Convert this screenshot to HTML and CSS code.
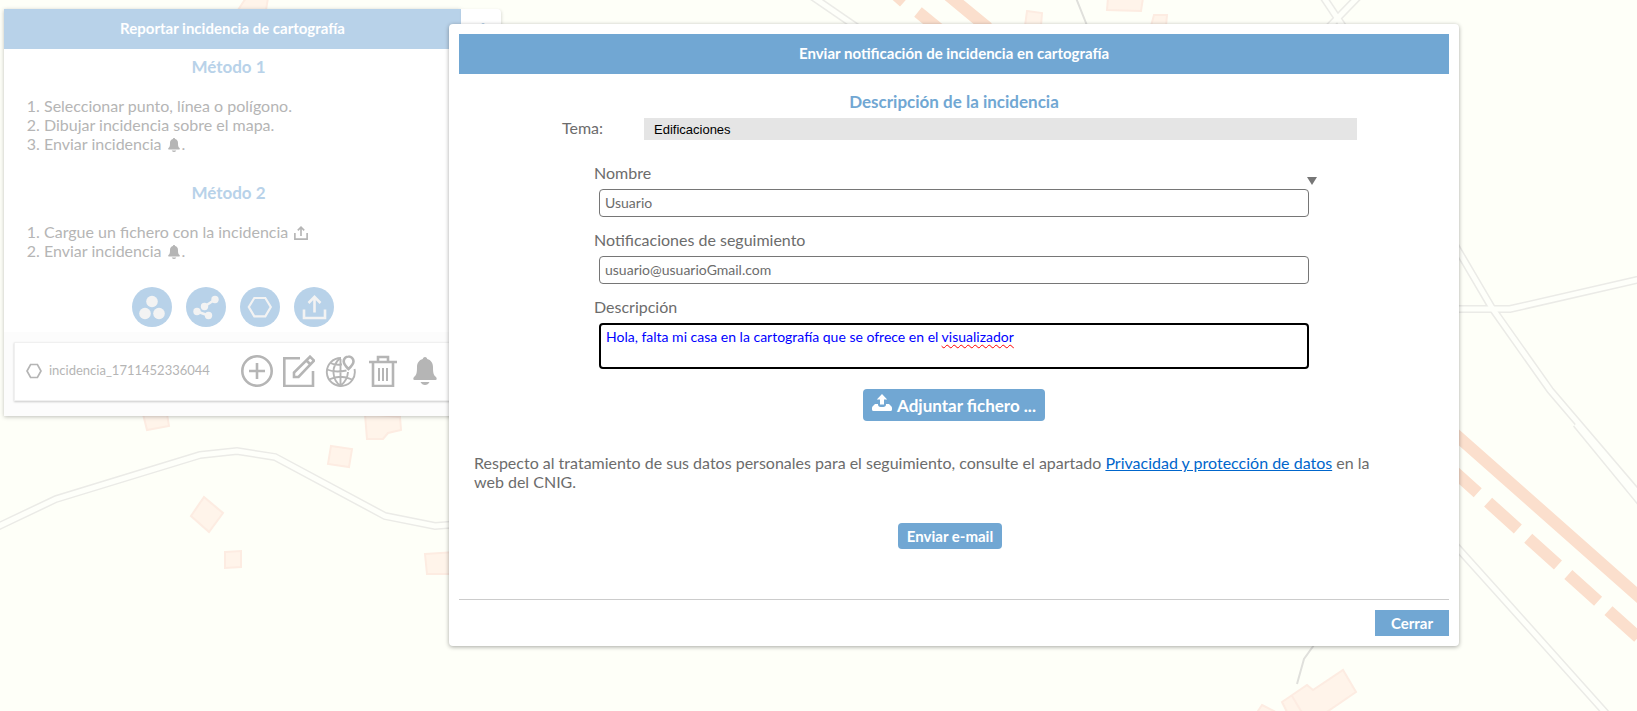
FILE: index.html
```html
<!DOCTYPE html>
<html lang="es">
<head>
<meta charset="utf-8">
<title>Incidencia en cartografía</title>
<link rel="stylesheet" href="styles.css">
</head>
<body>
<svg class="map" viewBox="0 0 1637 711" preserveAspectRatio="xMinYMin slice" aria-hidden="true">
  <g class="road-edge">
    <path d="M-5 528 56 499 200 455 237 451 275 457 385 516 435 526 460 524"/>
    <path d="M810 -5 858 28"/>
    <path d="M1455 245 1492 308 1550 390 1637 492 1650 508"/>
    <path d="M1455 309 1510 309 1637 280 1650 277"/>
    <path d="M1322 -5 1344 28M1360 -5 1326 30"/>
    <path d="M1455 545 1500 595 1612 720"/>
    <path d="M1576 424 1650 514"/>
  </g>
  <g class="road-fill">
    <path d="M-5 528 56 499 200 455 237 451 275 457 385 516 435 526 460 524"/>
    <path d="M810 -5 858 28"/>
    <path d="M1455 309 1510 309 1637 280 1650 277"/>
    <path d="M1455 245 1492 308 1550 390 1637 492 1650 508"/>
    <path d="M1322 -5 1344 28M1360 -5 1326 30"/>
    <path d="M1455 545 1500 595 1612 720"/>
    <path d="M1576 424 1650 514"/>
  </g>
  <path class="track" d="M1076 -2 1088 28M1314 645 1304 659 1297 684"/>
  <path class="rail" d="M1455 434 1645 602M948 -5 988 28"/>
  <path class="rail dashed" d="M1448 466 1650 648"/>
  <path class="rail" d="M895 -6 904 2M918 12 940 30"/>
  <g class="building">
    <path d="M143 414 167 414 169 426 147 430Z"/>
    <path d="M365 414 400 417 401 430 388 433 383 439 367 439Z"/>
    <path d="M331 446 352 449 349 467 328 464Z"/>
    <path d="M204 497 223 513 209 532 191 516Z"/>
    <path d="M225 552 241 551 241 567 225 568Z"/>
    <path d="M425 554 455 552 455 574 427 574Z"/>
    <path d="M246 -2 268 -2 266 10 238 10Z"/>
    <path d="M1108 -2 1143 -2 1141 11 1107 10Z"/>
    <path d="M1027 11 1042 13 1041 26 1025 26Z"/>
    <path d="M1154 15 1167 15 1166 26 1151 26Z"/>
    <path d="M1282 702 1307 685 1313 690 1343 670 1356 692 1318 718 1290 718ZM1292 696 1304 716"/>
    <path d="M1262 705 1274 711 1268 718 1256 714Z"/>
  </g>
</svg>

<aside class="panel">
  <button class="panel-tab" type="button" aria-label="Plegar panel"><svg viewBox="0 0 12 12"><path d="M9 0 2 6 9 12"/></svg></button>
  <div class="panel-body">
    <h2 class="bar">Reportar incidencia de cartografía</h2>
    <h3 class="method">Método 1</h3>
    <ol class="steps">
      <li>Seleccionar punto, línea o polígono.</li>
      <li>Dibujar incidencia sobre el mapa.</li>
      <li>Enviar incidencia <svg class="mini" viewBox="0 0 24 28"><use href="#bell"/></svg>.</li>
    </ol>
    <h3 class="method">Método 2</h3>
    <ol class="steps">
      <li>Cargue un fichero con la incidencia <svg class="mini wide" viewBox="0 0 24 24"><use href="#upload"/></svg></li>
      <li>Enviar incidencia <svg class="mini" viewBox="0 0 24 28"><use href="#bell"/></svg>.</li>
    </ol>
    <div class="tools">
      <button type="button" aria-label="Punto"><svg viewBox="0 0 40 40"><g fill="currentColor"><circle cx="20" cy="14.500" r="5.800"/><circle cx="13" cy="26.500" r="5.800"/><circle cx="27" cy="26.500" r="5.800"/></g></svg></button>
      <button type="button" aria-label="Línea"><svg viewBox="0 0 40 40"><g fill="currentColor"><circle cx="29" cy="12.500" r="3.700"/><circle cx="18.500" cy="19.500" r="3.700"/><circle cx="11" cy="24.500" r="3.700"/><circle cx="22.500" cy="28.500" r="3.700"/></g><path d="M29 12.500 18.500 19.500M11 24.500 22.500 28.500" fill="none" stroke="currentColor" stroke-width="2.600"/></svg></button>
      <button type="button" aria-label="Polígono"><svg viewBox="0 0 40 40"><path d="M14.300 11H25.300L30.800 20 25.300 29.300H14.300L8.800 20Z" fill="none" stroke="currentColor" stroke-width="2.200"/></svg></button>
      <button type="button" aria-label="Cargar"><svg viewBox="0 0 40 40"><path d="M10 22.500V31H31V22.500M20.500 25.500V10.500M14.500 16 20.500 9.800 26.500 16" fill="none" stroke="currentColor" stroke-width="2.600"/></svg></button>
    </div>
  </div>
  <div class="layers">
    <div class="layer">
      <svg class="hex" viewBox="0 0 16 16"><path d="M4.600 1.500H11.400L15 8 11.400 14.500H4.600L1 8Z" fill="none" stroke="currentColor" stroke-width="1.700"/></svg>
      <span class="layer-name">incidencia_1711452336044</span>
      <div class="layer-actions">
        <button type="button" aria-label="Añadir"><svg viewBox="0 0 32 32"><g fill="none" stroke="currentColor" stroke-width="2.600"><circle cx="16" cy="16" r="14.700"/><path d="M16 8V24M8 16H24"/></g></svg></button>
        <button type="button" aria-label="Editar"><svg viewBox="0 0 32 32"><g fill="none" stroke="currentColor" stroke-width="2.600"><path d="M17 3.300H1.300V31H30V16"/><path d="M11 22V17.500L27 1.700 31 5.700 15.500 22ZM23.500 5.500 27.500 9.500"/></g></svg></button>
        <button type="button" aria-label="Localizar"><svg viewBox="0 0 32 32"><g fill="none" stroke="currentColor" stroke-width="1.900"><path d="M16 3A14 14 0 1 0 29.500 14"/><path d="M14.500 3.500Q8 10 8.500 18T15.500 31Q22.500 25 23 17M2 14.500Q10 18 21.500 15.500M4 24.500Q15.500 19 27 24.500M5.500 8Q10 10.500 17 9.500M15.500 4V31"/></g><path d="M23.500 1.500A4.800 4.800 0 0 0 18.700 6.300C18.700 9.500 23.500 14 23.500 14S28.500 9.500 28.500 6.300A4.800 4.800 0 0 0 23.500 1.500Z" fill="#fff" stroke="currentColor" stroke-width="2.600"/></svg></button>
        <button type="button" aria-label="Borrar"><svg viewBox="0 0 32 32"><g fill="none" stroke="currentColor" stroke-width="2.600"><path d="M2 7H30M11 7V2H21V7M6 7V31H26V7"/><path d="M12 13V26M16 13V26M20 13V26" stroke-width="2"/></g></svg></button>
        <button type="button" aria-label="Enviar"><svg class="big-bell" viewBox="0 0 24 28"><g id="bell" fill="currentColor"><path d="M12 0C10.500 0 9.900 1 9.800 2 6 3 4 6 4 10 4 16 3.500 18 1 20 0 21 0 23 1.500 23H22.500C24 23 24 21 23 20 20.500 18 20 16 20 10 20 6 18 3 14.200 2 14.100 1 13.500 0 12 0Z"/><path d="M7.500 25H16.500Q15 28 12 28T7.500 25Z"/></g></svg></button>
      </div>
    </div>
  </div>
</aside>

<main class="stage">
<section class="dialog" role="dialog" aria-labelledby="dlg-title">
  <h2 class="bar dialog-bar" id="dlg-title">Enviar notificación de incidencia en cartografía</h2>
  <form class="report">
    <h3 class="subtitle">Descripción de la incidencia</h3>
    <div class="topic">
      <label for="tema">Tema:</label>
      <select id="tema"><option>Edificaciones</option></select>
    </div>
    <div class="fields">
      <span class="arrow" aria-hidden="true"></span>
      <label for="nombre">Nombre</label>
      <input id="nombre" type="text" value="Usuario">
      <label for="mail">Notificaciones de seguimiento</label>
      <input id="mail" type="text" value="usuario@usuarioGmail.com">
      <label id="desc-label">Descripción</label>
      <div class="editor" role="textbox" aria-labelledby="desc-label" aria-multiline="true" contenteditable="true" spellcheck="false">Hola, falta mi casa en la cartografía que se ofrece en el <span class="misspelt">visualizador</span></div>
    </div>
    <button class="attach" type="button"><svg viewBox="0 0 20 18"><path d="M10 0 15.200 5.500H12V10.500H8V5.500H4.800ZM3 10H6C6 13 8 13 10 13S14 13 14 10H17L19.500 12.500Q20 13 20 14V15.500Q20 17 18.500 17H1.500Q0 17 0 15.500V14Q0 13 .5 12.500Z" fill="currentColor"/></svg>Adjuntar fichero ...</button>
    <p class="privacy">Respecto al tratamiento de sus datos personales para el seguimiento, consulte el apartado <a href="#privacidad">Privacidad y protección de datos</a> en la web del CNIG.</p>
    <button class="send" type="button">Enviar e-mail</button>
  </form>
  <footer class="dialog-foot"><button class="close" type="button">Cerrar</button></footer>
</section>
</main>
<svg class="defs" aria-hidden="true"><defs><g id="upload"><path d="M1.500 12V22.500H22.500V12M12 17V2M6.500 7.500 12 2 17.500 7.500" fill="none" stroke="currentColor" stroke-width="2.800"/></g></defs></svg>
</body>
</html>
```
FILE: styles.css
```css
* { box-sizing: border-box; }
body {
  margin: 0;
  min-height: 100vh;
  overflow: hidden;
  background: #fefff8;
  color: #6c6c6c;
  font: 16px/19px Lato, "Open Sans", sans-serif;
}
h2, h3, p, ol { margin: 0; }
button { font-family: inherit; border: 0; padding: 0; cursor: pointer; }
svg { display: block; }
.defs { position: absolute; width: 0; height: 0; }

/* Map canvas */
.map { position: absolute; inset: 0; width: 100%; height: 100%; }
.map path { fill: none; }
.map .road-edge path { stroke: #ebebe7; stroke-width: 8; }
.map .road-fill path { stroke: #fefffa; stroke-width: 5; }
.map .track { stroke: #e0e0dc; stroke-width: 2; }
.map .rail { stroke: #fbdfcd; stroke-width: 12; }
.map .dashed { stroke-dasharray: 40 14; }
.map .building path { fill: #fff4ea; stroke: #fdece2; stroke-width: 2; }

/* Side panel */
.panel {
  position: absolute;
  top: 9px;
  left: 4px;
  width: 457px;
  color: #b5b5b5;
  background: #fcfcfc;
  box-shadow: 0 1px 4px rgba(0, 0, 0, .25);
}
.panel-tab {
  position: absolute;
  left: 100%;
  top: 0;
  width: 40px;
  height: 40px;
  padding: 14px;
  background: #fff;
  color: #b8d2e9;
  border-radius: 0 4px 4px 0;
  box-shadow: 1px 1px 3px rgba(0, 0, 0, .12);
}
.panel-tab path { fill: none; stroke: currentColor; stroke-width: 2; }
.panel-body { background: #fff; padding-bottom: 5px; }
.bar {
  background: #b8d2e9;
  color: #fff;
  text-align: center;
  font-size: 15px;
  line-height: 38px;
  padding-bottom: 2px;
}
.method {
  padding-right: 8px;
  margin: 8px 0 19px;
  color: #b8d2e9;
  font-size: 17px;
  line-height: 20px;
  text-align: center;
}
.steps { padding-left: 40px; margin-bottom: 30px; }
.mini { display: inline-block; width: 12px; height: 14px; margin: 0 2px; vertical-align: -2px; }
.wide { width: 14px; height: 14px; }
.tools { display: flex; gap: 14px; justify-content: center; margin-top: -3px; padding-left: 1px; }
.tools button { width: 40px; height: 40px; border-radius: 50%; background: #b8d2e9; color: #f3f3f3; }
.layers { padding: 10px 0 15px 10px; }
.layer {
  display: flex;
  align-items: center;
  height: 59px;
  padding: 0 19px 2px 11px;
  background: #fff;
  border: 1px solid #f0f0f0;
  box-shadow: 0 1px 2px rgba(0, 0, 0, .2);
  font-size: 13px;
}
.hex { width: 16px; height: 16px; }
.layer-name { margin-left: 7px; }
.layer-actions { display: flex; gap: 10px; margin-left: auto; }
.layer-actions button { width: 32px; height: 32px; background: none; color: inherit; }
.layer-actions .big-bell { width: 24px; height: 28px; margin: 0 auto; }

/* Dialog */
.stage { padding: 24px 178px 0 449px; }
.dialog {
  position: relative;
  padding: 10px;
  background: #fff;
  border-radius: 4px;
  box-shadow: 0 1px 4px rgba(0, 0, 0, .35);
}
.dialog-bar { background: #71a7d3; }
.report { display: flex; flex-direction: column; padding: 18px 15px 50px; }
.subtitle { color: #71a7d3; font-size: 17px; line-height: 20px; text-align: center; }
.topic { display: flex; align-items: center; margin: 6px 77px 0 88px; }
.topic label { flex: none; width: 82px; padding-bottom: 3px; }
.topic select {
  flex: 1;
  appearance: none;
  height: 22px;
  padding: 0 10px;
  border: 0;
  border-radius: 0;
  background: #e5e5e5;
  color: #000;
  font: 13px "Liberation Sans", sans-serif;
}
.fields { position: relative; display: flex; flex-direction: column; margin: 23px 125px 0 120px; }
.fields input, .editor {
  margin: 7px 0 13px 5px;
  padding: 0 5px 2px;
  height: 28px;
  border: 1px solid #767676;
  border-radius: 4px;
  background: #fff;
  color: #6c6c6c;
  font: 14px/16px Lato, "Open Sans", sans-serif;
}
.editor {
  height: 46px;
  margin-bottom: 0;
  padding: 4px 5px;
  border: 2px solid #000;
  outline: 0;
  color: #00f;
}
.misspelt { text-decoration: underline wavy #f00 1px; text-underline-offset: 2px; }
.arrow {
  position: absolute;
  right: -8px;
  top: 14px;
  border: 5px solid transparent;
  border-top: 8px solid #767676;
  border-bottom: 0;
}
.attach {
  display: flex;
  align-items: center;
  align-self: center;
  gap: 5px;
  height: 32px;
  margin-top: 20px;
  padding: 0 9px;
  border-radius: 4px;
  background: #71a7d3;
  color: #fff;
  font-size: 17px;
  font-weight: 700;
}
.attach svg { width: 20px; height: 18px; margin-bottom: 4px; }
.privacy { margin-top: 32px; padding-right: 40px; }
.privacy a { color: #0066cc; }
.send, .close {
  height: 26px;
  background: #71a7d3;
  color: #fff;
  font-size: 15px;
  font-weight: 700;
}
.send { align-self: center; margin: 32px 8px 0 0; padding: 0 9px; border-radius: 4px; }
.dialog-foot { display: flex; justify-content: flex-end; padding-top: 10px; border-top: 1px solid #ccc; }
.close { padding: 0 16px; }
```
